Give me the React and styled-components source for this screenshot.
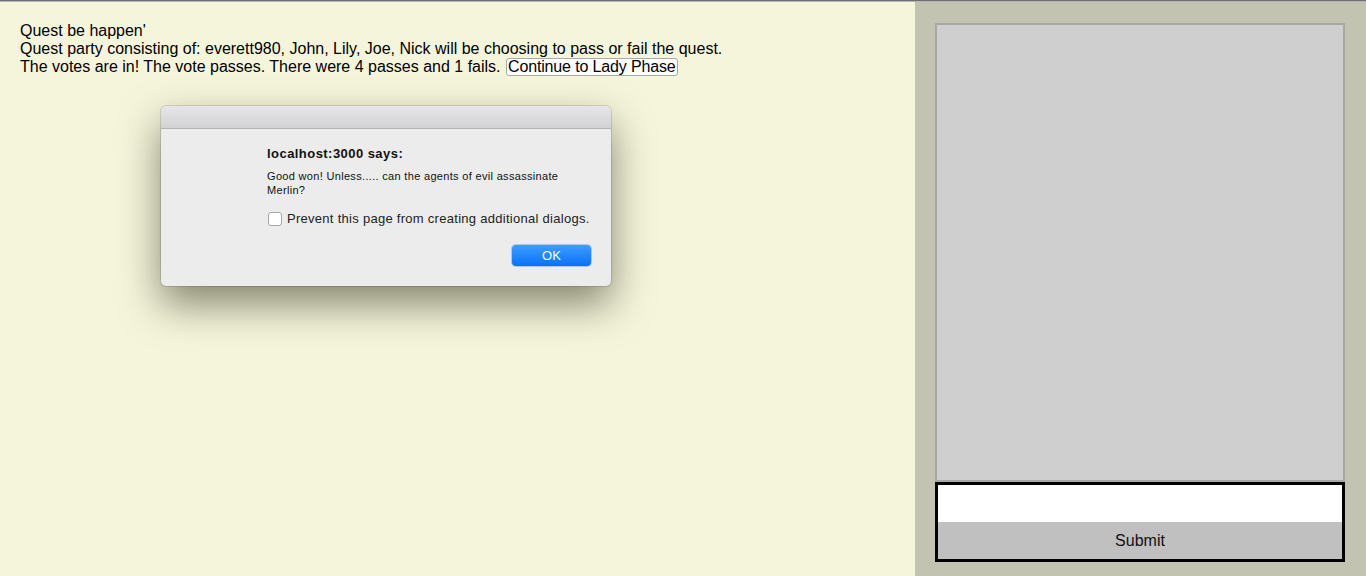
import React from 'react';
import styled, { createGlobalStyle } from 'styled-components';

const GlobalStyle = createGlobalStyle`
	html, body {
		margin: 0;
		padding: 0;
		height: 100%;
	}
	body {
		font-family: 'Liberation Sans', Arial, sans-serif;
		border-top: 1px solid #6f6f6f;
		box-sizing: border-box;
		overflow: hidden;
	}
	#root {
		height: 100%;
	}
`;

const Page = styled.div`
	display: flex;
	height: 575px;
	border-top: 1px solid #b4b4b4;
	box-sizing: border-box;
	position: relative;
`;

const GamePane = styled.div`
	width: 915px;
	background: #f5f5dc;
	padding: 20px 20px 0;
	box-sizing: border-box;
	font-size: 16px;
	line-height: 18px;
	color: #000;
`;

const Line = styled.div`
	white-space: nowrap;
`;

const PhaseButton = styled.button`
	font-family: 'Liberation Sans', Arial, sans-serif;
	font-size: 16px;
	line-height: 16px;
	padding: 0 1px;
	margin-left: 1px;
	background: #fff;
	border: 1px solid #a9a9a9;
	border-radius: 3px;
	color: #000;
	vertical-align: top;
	height: 18px;
	letter-spacing: -0.15px;
`;

const ChatPane = styled.div`
	flex: 1;
	background: #c2c3b0;
	padding: 21px 21px 14px 20px;
	display: flex;
	flex-direction: column;
	box-sizing: border-box;
`;

const Messages = styled.div`
	flex: 1;
	background: #cfcfcf;
	border: 2px solid #a8a8a8;
`;

const ChatForm = styled.form`
	display: flex;
	flex-direction: column;
	border: 3px solid #000;
	margin: 0;
`;

const ChatInput = styled.input`
	height: 37px;
	border: none;
	background: #fff;
	padding: 0 6px;
	outline: none;
	font-size: 16px;
`;

const SubmitButton = styled.button`
	height: 37px;
	border: none;
	background: #c0c0c0;
	font-family: 'Liberation Sans', Arial, sans-serif;
	font-size: 16px;
	color: #111;
`;

const Dialog = styled.div`
	position: absolute;
	left: 161px;
	top: 104px;
	width: 450px;
	height: 180px;
	background: #ececec;
	border-radius: 5px;
	box-shadow: 0 0 0 1px rgba(0, 0, 0, 0.12), 0 18px 40px rgba(40, 40, 20, 0.55);
	overflow: hidden;
	font-family: 'Liberation Sans', Arial, sans-serif;
	display: flex;
	flex-direction: column;
`;

const TitleBar = styled.div`
	height: 22px;
	background: linear-gradient(#e6e5e7, #d3d2d4);
	border-bottom: 1px solid #b3b3b3;
`;

const DialogBody = styled.div`
	flex: 1;
	padding: 17px 20px 0 106px;
	display: flex;
	flex-direction: column;
`;

const DialogTitle = styled.div`
	font-size: 13px;
	font-weight: bold;
	color: #111;
	line-height: 16px;
	letter-spacing: 0.45px;
`;

const DialogMessage = styled.div`
	margin-top: 7px;
	font-size: 11px;
	line-height: 14px;
	color: #111;
	width: 320px;
	letter-spacing: 0.32px;
`;

const CheckRow = styled.label`
	display: flex;
	align-items: center;
	gap: 5px;
	margin-top: 14px;
	font-size: 13px;
	color: #222;
	line-height: 16px;
	letter-spacing: 0.28px;
`;

const CheckBox = styled.span`
	width: 12px;
	height: 12px;
	border: 1px solid #a6a6a6;
	border-radius: 3px;
	background: #fff;
	margin-left: 1px;
`;

const Actions = styled.div`
	display: flex;
	justify-content: flex-end;
	margin-top: 18px;
`;

const OkButton = styled.button`
	width: 79px;
	height: 21px;
	border: none;
	border-radius: 4px;
	background: linear-gradient(#3d9dff, #0a72f7);
	color: #fff;
	font-family: 'Liberation Sans', Arial, sans-serif;
	font-size: 13px;
	padding: 0;
	box-shadow: 0 0 0 1px rgba(0, 80, 200, 0.25);
`;

const App = () => (
	<>
		<GlobalStyle />
		<Page>
			<GamePane>
				<Line>Quest be happen'</Line>
				<Line>Quest party consisting of: everett980, John, Lily, Joe, Nick will be choosing to pass or fail the quest.</Line>
				<Line>
					The votes are in! The vote passes. There were 4 passes and 1 fails.
					{' '}
					<PhaseButton type='button'>Continue to Lady Phase</PhaseButton>
				</Line>
			</GamePane>
			<ChatPane>
				<Messages />
				<ChatForm onSubmit={(e) => e.preventDefault()}>
					<ChatInput type='text' />
					<SubmitButton type='submit'>Submit</SubmitButton>
				</ChatForm>
			</ChatPane>
			<Dialog>
				<TitleBar />
				<DialogBody>
					<DialogTitle>localhost:3000 says:</DialogTitle>
					<DialogMessage>Good won! Unless..... can the agents of evil assassinate Merlin?</DialogMessage>
					<CheckRow>
						<CheckBox />
						Prevent this page from creating additional dialogs.
					</CheckRow>
					<Actions>
						<OkButton type='button'>OK</OkButton>
					</Actions>
				</DialogBody>
			</Dialog>
		</Page>
	</>
);

export default App;
